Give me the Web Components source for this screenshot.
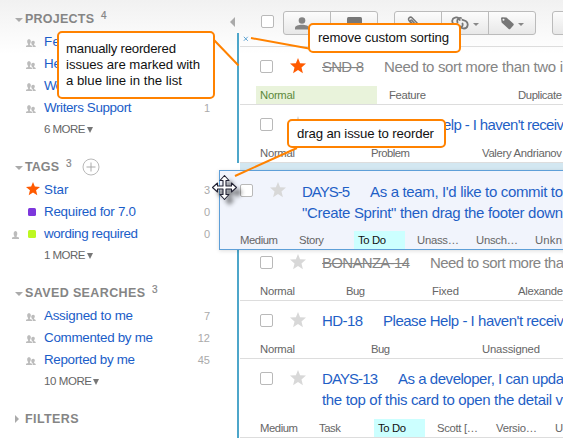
<!DOCTYPE html>
<html lang="en"><head><meta charset="utf-8"><title>Issues</title>
<style>
html,body{margin:0;height:438px;overflow:hidden}
body{font-family:"Liberation Sans",Arial,sans-serif;background:#fff}
</style></head><body>
<issue-app>
  <side-section slot="side" label="PROJECTS" w="69" count="4" more="6 MORE" mw="41.5">
    <side-item icon="group" w="16">Fe</side-item>
    <side-item icon="group" w="17">He</side-item>
    <side-item icon="group" w="19">Wo</side-item>
    <side-item icon="group" w="87.5" count="1">Writers Support</side-item>
  </side-section>
  <side-section slot="side" label="TAGS" w="34" count="3" add more="1 MORE" mw="41.5">
    <side-item icon="star" w="24.5" count="3">Star</side-item>
    <side-item icon="sq" color="#7d37dc" w="92" count="0">Required for 7.0</side-item>
    <side-item icon="sq" color="#bdf821" person w="94" count="0">wording required</side-item>
  </side-section>
  <side-section slot="side" label="SAVED SEARCHES" w="120" count="3" more="10 MORE" mw="48">
    <side-item icon="group" w="89" count="7">Assigned to me</side-item>
    <side-item icon="group" w="109" count="12">Commented by me</side-item>
    <side-item icon="group" w="91" count="45">Reported by me</side-item>
  </side-section>
  <side-section slot="side" label="FILTERS" w="53.5" closed></side-section>

  <tool-bar slot="main"></tool-bar>
  <issue-row slot="main" done starred key="SND-8" kw="42" gap="20" l1="Need to sort more than two i" lw="179" cell="121" f="Normal:35:green|Feature:37|Duplicate:44"></issue-row>
  <issue-row slot="main" key="" kw="0" gap="121" l1="elp - I haven't receiv" lw="121" cell="103" f="Normal:35|Problem:39|Valery Andrianov:80"></issue-row>
  <drop-slot slot="main"></drop-slot>
  <issue-row slot="main" done key="BONANZA-14" kw="88" gap="20" l1="Need to sort more tha" lw="134" cell="78" f="Normal:35|Bug:19|Fixed:27|Alexande:45"></issue-row>
  <issue-row slot="main" key="HD-18" kw="41" gap="20" l1="Please Help - I haven't receiv" lw="181" cell="103" f="Normal:35|Bug:19|Unassigned:58"></issue-row>
  <issue-row slot="main" key="DAYS-13" kw="56" gap="20" l1="As a developer, I can upda" lw="166" l2="the top of this card to open the detail v" l2w="241" cell="51" f="Medium:38|Task:22|To Do:28:cyan|Scott […:41|Versio…:41|U:8"></issue-row>
  <issue-row slot="over" drag key="DAYS-5" kw="48" gap="20" l1="As a team, I'd like to commit to" lw="193" l2="&quot;Create Sprint&quot; then drag the footer down" l2w="261" cell="51" f="Medium:38|Story:25|To Do:28:cyan|Unass…:42|Unsch…:42|Unkn:27"></issue-row>
  <note-layer slot="over"></note-layer>
</issue-app>
<script>
const STAR='M8 0l2.1 5.2 5.9.4-4.5 3.8 1.4 5.8L8 12.1l-4.9 3.1 1.4-5.8L0 5.6l5.9-.4z';
const shadow=(el,html)=>{el.attachShadow({mode:'open'}).innerHTML=html};
const at=(el,n)=>(el.getAttribute(n)||'').replace(/&/g,'&amp;').replace(/</g,'&lt;');

customElements.define('issue-app',class extends HTMLElement{connectedCallback(){shadow(this,`
<style>
:host{position:relative;display:grid;grid-template-columns:237px 326px;width:563px;height:438px;overflow:hidden;background:linear-gradient(#f1f1f1,#fff 54px)}
aside{padding-top:8px;display:flex;flex-direction:column;gap:16px;position:relative}
main{display:flex;flex-direction:column;padding-left:3px;position:relative;min-width:0}
.edge{position:absolute;left:0;width:2px;background:#4da6ca}
.fold{position:absolute;right:2px;top:17px;border:5px solid transparent;border-left:0;border-right-color:#aaa}
</style><aside><slot name="side"></slot><i class="fold"></i></aside>
<main><i class="edge" style="top:33px;height:130px"></i><i class="edge" style="top:249px;bottom:0"></i><slot name="main"></slot></main><slot name="over"></slot>`)}});

customElements.define('side-section',class extends HTMLElement{connectedCallback(){
const closed=this.hasAttribute('closed');
shadow(this,`<style>
:host{display:block}
header{height:22px;display:flex;align-items:center;padding-left:16px;color:#858585;font-weight:bold;font-size:12.5px}
.a{width:0;height:0;border:4px solid transparent;border-bottom:0;border-top-color:#aaa;margin:2px 2px 0 -1px}
.a.c{border:4px solid transparent;border-right:0;border-left-color:#aaa;margin:0 6px 0 -1px}
sup{font-size:10px;line-height:10px;margin:-6px 0 0 7px;align-self:center;font-weight:normal;-webkit-text-stroke:.2px #858585}
svg{margin:-1px 0 0 10px}
footer{height:22px;display:flex;align-items:center;padding-left:44px;font-size:11.5px;color:#666}
footer i{border:3px solid transparent;border-top:6px solid #777;border-bottom:0;margin:2px 0 0 1px}
</style><header><i class="a ${closed?'c':''}"></i><fit-text w="${at(this,'w')}">${at(this,'label')}</fit-text>${this.hasAttribute('count')?`<sup>${at(this,'count')}</sup>`:''}
${this.hasAttribute('add')?'<svg width="18" height="18" fill="none" stroke="#b9b9b9"><circle cx="9" cy="9" r="8"/><path d="M9 4.5v9M4.5 9h9" stroke="#aaa"/></svg>':''}</header><slot></slot>
${closed?'':`<footer><fit-text w="${at(this,'mw')}">${at(this,'more')}</fit-text><i></i></footer>`}`)}});

customElements.define('side-item',class extends HTMLElement{connectedCallback(){
const k=at(this,'icon');
const ic=k=='star'?`<svg width="14" height="14" viewBox="0 0 16 16" style="margin-top:-1px"><path fill="#ff5a00" d="${STAR}"/></svg>`
:k=='sq'?`<svg width="8" height="8" style="margin:2px 0 0 2px"><rect width="8" height="8" rx="1.5" fill="${at(this,'color')}"/></svg>`
:`<svg width="10" height="9" style="margin-top:4px" fill="#bcbcbc"><path d="M0 8V6.8l2.1-.9V5C1.3 4 1.1 3 1.2 2 1.3.9 2 .3 3 .3S4.700.9 4.800 2C4.900 3 4.700 4 3.900 5v.9l2.100.9V8zM6.600 8V6.300L5.700 5.500 5.300 4.300C5 2.700 5.800 1.700 7.200 1.700S9 2.700 8.800 3.800C8.700 4.500 8.500 4.900 8.100 5.200v.9L9.700 6.900V8z"/></svg>`;
shadow(this,`<style>
:host{height:22px;display:flex;align-items:center;font-size:13.4px;color:#1a5dc8;padding-right:27px}
.p{width:26px;display:flex;box-sizing:border-box;padding-left:12px}
.i{width:18px;display:flex}
.n{margin:2px 0 0 auto;font-size:11px;color:#aaa}
</style><span class="p">${this.hasAttribute('person')?'<svg width="7" height="9" style="margin-top:4px" fill="#bcbcbc"><path d="M0 8V6.600l2.400-.8V5C1.300 4 1.300 0 3.500 0S5.700 4 4.600 5v.8L7 6.600V8z"/></svg>':''}</span><span class="i">${ic}</span><fit-text w="${at(this,'w')}">${this.textContent}</fit-text><span class="n">${at(this,'count')}</span>`)}});

customElements.define('check-box',class extends HTMLElement{connectedCallback(){shadow(this,`<style>:host{display:block;box-sizing:border-box;width:13px;height:13px;border:1px solid #b9b9b9;border-radius:2px;background:#fff;flex:none}</style>`)}});

customElements.define('tool-bar',class extends HTMLElement{connectedCallback(){
const car='<i></i>';
shadow(this,`<style>
:host{position:relative;border-bottom:1px solid #ddd;display:flex;align-items:flex-start;padding:11px 0 0 21px;box-sizing:content-box;height:35px;overflow:hidden}
check-box{margin:4px 9px 0 0}
.g{display:flex;flex:none;box-sizing:border-box;height:24px;border:1px solid #bbb;border-radius:3px;background:linear-gradient(#fcfcfc,#e8e8e8);margin-right:16px}
.b{width:46px;display:flex;align-items:center;justify-content:center;gap:4px}
.b+.b{border-left:1px solid #bbb}
i{border:3px solid transparent;border-top-color:#888;border-bottom:0;margin-top:2px}
.x{position:absolute;left:3px;top:36px;}
</style><check-box></check-box>
<div class="g"><div class="b"><svg width="14" height="13" fill="#848484"><circle cx="7" cy="3.500" r="3.300"/><path d="M0 12.500V10.500C0 9 3.500 7.800 7 7.800s7 1.200 7 2.700v2z"/></svg>${car}</div><div class="b"><svg width="15" height="12"><rect width="15" height="12" rx="1.500" fill="#777"/></svg></div></div>
<div class="g"><div class="b"><svg width="13" height="14" fill="none" stroke="#777" stroke-width="1.500" stroke-linecap="round"><path d="M4 7L2 4.500C.5 2 3.500.2 5 1.800L11 8c2 2.500-.8 5-2.800 3L3.500 5.500C2.800 4.500 4.200 3.500 5 4.400L9 9"/></svg>${car}</div>
<div class="b"><svg width="18" height="14" fill="none" stroke="#777" stroke-width="1.800" stroke-linecap="round"><path d="M6 9.500L3 8.200C.3 6.500.7 2.500 4 1.600 6 1 8 2 8.800 4M6.500 6.500C5.500 3.500 8 1.500 10 2M11.500 3.800l3.200 1.200c3.300 2 2.300 7.500-1.700 7.500-2 0-3.500-.8-4.200-2.500M11.500 7.500c.7 2.500-1 4.500-3.500 4"/></svg>${car}</div>
<div class="b"><svg width="13" height="14" fill="#777"><path fill-rule="evenodd" d="M0 2.500Q0 1.200 1.300 1.200L5.500 1.500 12.500 7.800Q13 8.500 12.500 9.200L9.200 12.900Q8.500 13.400 7.700 12.900L.6 6.500zM2.500 2.700a1 1 0 100 2 1 1 0 000-2z"/></svg>${car}</div></div>
<div class="g"><div class="b"></div></div>
<svg class="x" width="6" height="6" stroke="#5fa3d2"><path d="M.8.800l4 4M4.800.800l-4 4"/></svg>`)}});

customElements.define('drop-slot',class extends HTMLElement{connectedCallback(){shadow(this,`<style>:host{display:block;height:80px;background:#d3e7f1}</style>`)}});

customElements.define('issue-row',class extends HTMLElement{connectedCallback(){
const two=this.hasAttribute('l2'),drag=this.hasAttribute('drag'),done=this.hasAttribute('done');
const f=this.getAttribute('f').split('|').map(s=>{const[t,w,c='']=s.split(':');return`<span class="${c}"><fit-text w="${w}">${t}</fit-text></span>`}).join('');
shadow(this,`<style>
:host{display:block;box-sizing:border-box;height:${two?79:58}px;border-bottom:1px solid #ddd;position:relative;flex:none;overflow:hidden;color:${done?'#858585':'#1f5fc6'}}
:host([drag]){position:absolute;left:219px;top:170px;width:360px;height:80px;border:1px solid #5e9fd8;background:#f1f4fc;box-shadow:0 1px 4px #0002}
.top{display:flex;padding-left:20px;height:${two?60:39}px}
check-box{margin:${drag?'13px':'13px'} 17px 0 0}
svg{margin:${drag?'11px':'11px'} 16px 0 0;flex:none}
.t{font-size:15px;line-height:21px;padding-top:${drag?10:9}px;white-space:nowrap}
.l{display:flex}
s{margin-right:${at(this,'gap')}px;text-decoration:${done?'line-through':'none'}}
.f{display:flex;gap:8px;padding-left:16px;font-size:11.3px;color:#666;line-height:19px;height:18px}
.f span{width:${at(this,'cell')}px;padding-left:4px;box-sizing:border-box;flex:none;white-space:nowrap}
.green{background:#e9f3db;color:#5c8a3c}.cyan{background:#ccffff;color:#111}
</style><div class="top"><check-box></check-box><svg width="16" height="16" viewBox="0 0 16 16"><path fill="${this.hasAttribute('starred')?'#ff5a00':'#d8d8d8'}" d="${STAR}"/></svg>
<div class="t"><div class="l"><s><fit-text w="${at(this,'kw')}">${at(this,'key')}</fit-text></s><fit-text w="${at(this,'lw')}">${at(this,'l1')}</fit-text></div>${two?`<fit-text w="${at(this,'l2w')}">${at(this,'l2')}</fit-text>`:''}</div></div><div class="f">${f}</div>`)}});

customElements.define('note-layer',class extends HTMLElement{connectedCallback(){shadow(this,`<style>
:host{position:absolute;inset:0;color:#111;font-size:13.2px;line-height:16px}
div{position:absolute;box-sizing:border-box;border:2px solid #ff8200;border-radius:5px;background:#fff;display:flex;flex-direction:column;justify-content:center;align-items:flex-start;padding-left:7px}
svg{position:absolute;left:0;top:0}
.c{filter:drop-shadow(5px 5px 2px #0007)}
</style>
<div style="left:57px;top:31px;width:158px;height:68px"><fit-text w="110">manually reordered</fit-text><fit-text w="134">issues are marked with</fit-text><fit-text w="116">a blue line in the list</fit-text></div>
<div style="left:308px;top:23px;width:153px;height:30px;padding-left:8px"><fit-text w="131">remove custom sorting</fit-text></div>
<div style="left:287px;top:119px;width:159px;height:29px;padding-left:8px"><fit-text w="137">drag an issue to reorder</fit-text></div>
<svg width="563" height="438" fill="none" stroke="#ff8200" stroke-width="2"><path d="M214 40L238.500 65.500M251 38L309 48.500M235 176L297 148"/>
<g class="c"><path fill="#fff" stroke="#223" stroke-width="1.100" stroke-linejoin="round" d="M224.500 175.500l4.500 5h-3v5.500h5.500v-3l5 4.500-5 4.500v-3H226v5.500h3l-4.500 5-4.500-5h3V189h-5.500v3l-5-4.500 5-4.500v3h5.500v-5.500h-3z"/></g></svg>`)}});

/* Tracks its text so that it spans the width given in "w". */
customElements.define('fit-text',class extends HTMLElement{connectedCallback(){
shadow(this,`<style>:host{display:inline-block;white-space:pre;flex:none;text-decoration:inherit}</style><slot></slot>`);
const n=this.textContent.length,w=+this.getAttribute('w'),nat=this.getBoundingClientRect().width;
if(w&&n>1){const s=(w-nat)/(n-1);this.style.letterSpacing=s+'px';this.style.marginRight=-s+'px'}}});
</script></body></html>
